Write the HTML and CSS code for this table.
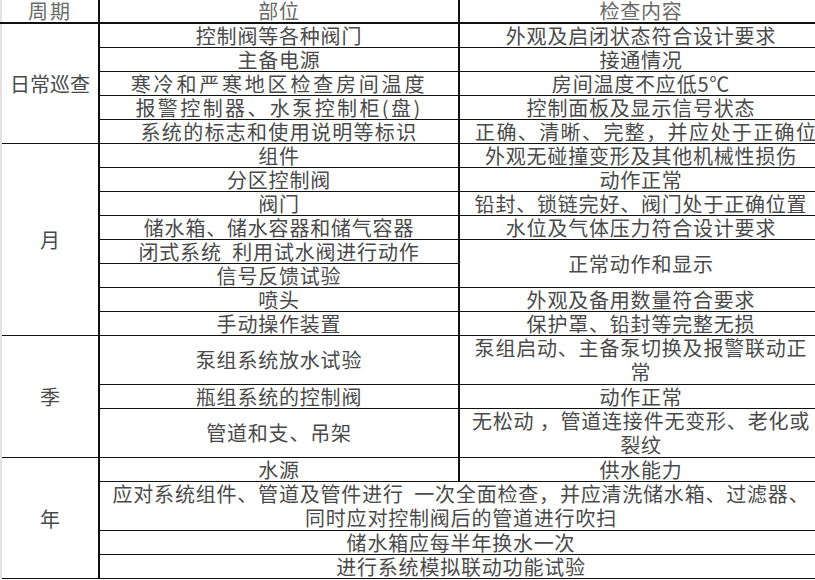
FILE: index.html
```html
<!DOCTYPE html>
<html lang="zh-CN">
<head>
<meta charset="utf-8">
<title>检查项目</title>
<link rel="stylesheet" href="styles.css">
</head>
<body>
<table class="grid">
  <colgroup>
    <col class="c1">
    <col class="c2">
    <col class="c3">
  </colgroup>
  <thead>
    <tr class="head">
      <th class="period">周期</th>
      <th>部位</th>
      <th>检查内容</th>
    </tr>
  </thead>
  <tbody>
    <tr>
      <td class="period" rowspan="5">日常巡查</td>
      <td>控制阀等各种阀门</td>
      <td>外观及启闭状态符合设计要求</td>
    </tr>
    <tr>
      <td>主备电源</td>
      <td>接通情况</td>
    </tr>
    <tr>
      <td class="wide3">寒冷和严寒地区检查房间温度</td>
      <td>房间温度不应低5℃</td>
    </tr>
    <tr>
      <td class="wide2">报警控制器、水泵控制柜(盘)</td>
      <td>控制面板及显示信号状态</td>
    </tr>
    <tr>
      <td class="wide1">系统的标志和使用说明等标识</td>
      <td class="clip">正确、清晰、完整，并应处于正确位置</td>
    </tr>
    <tr class="sec">
      <td class="period" rowspan="8">月</td>
      <td>组件</td>
      <td>外观无碰撞变形及其他机械性损伤</td>
    </tr>
    <tr>
      <td>分区控制阀</td>
      <td>动作正常</td>
    </tr>
    <tr>
      <td>阀门</td>
      <td>铅封、锁链完好、阀门处于正确位置</td>
    </tr>
    <tr>
      <td>储水箱、储水容器和储气容器</td>
      <td>水位及气体压力符合设计要求</td>
    </tr>
    <tr>
      <td>闭式系统&nbsp; 利用试水阀进行动作</td>
      <td rowspan="2">正常动作和显示</td>
    </tr>
    <tr>
      <td>信号反馈试验</td>
    </tr>
    <tr>
      <td>喷头</td>
      <td>外观及备用数量符合要求</td>
    </tr>
    <tr>
      <td>手动操作装置</td>
      <td>保护罩、铅封等完整无损</td>
    </tr>
    <tr class="sec double">
      <td class="period" rowspan="3">季</td>
      <td>泵组系统放水试验</td>
      <td>泵组启动、主备泵切换及报警联动正<br>常</td>
    </tr>
    <tr>
      <td>瓶组系统的控制阀</td>
      <td>动作正常</td>
    </tr>
    <tr class="double">
      <td>管道和支、吊架</td>
      <td>无松动 ，管道连接件无变形、老化或<br>裂纹</td>
    </tr>
    <tr class="sec">
      <td class="period" rowspan="4">年</td>
      <td>水源</td>
      <td>供水能力</td>
    </tr>
    <tr class="double">
      <td colspan="2">应对系统组件、管道及管件进行&nbsp; 一次全面检查，并应清洗储水箱、过滤器、<br>同时应对控制阀后的管道进行吹扫</td>
    </tr>
    <tr>
      <td colspan="2">储水箱应每半年换水一次</td>
    </tr>
    <tr>
      <td colspan="2">进行系统模拟联动功能试验</td>
    </tr>
  </tbody>
</table>
</body>
</html>
```
FILE: styles.css
```css
html, body {
  margin: 0;
  padding: 0;
  background: #ffffff;
  overflow: hidden;
}

body {
  width: 815px;
  height: 580px;
  font-family: "Noto Sans CJK SC", "Noto Sans", sans-serif;
  font-size: 20px;
  color: #4a4a4a;
}

.grid {
  border-collapse: collapse;
  table-layout: fixed;
  width: 822px;
}

.c1 { width: 98px; }
.c2 { width: 360px; }
.c3 { width: 364px; }

.grid th,
.grid td {
  height: 23px;
  padding: 0 6px;
  line-height: 23px;
  text-align: center;
  vertical-align: middle;
  white-space: nowrap;
  letter-spacing: 0.8px;
  font-weight: 400;
  border-top: 1px solid #111;
  border-bottom: 1px solid #111;
  border-left: 2px solid #111;
  border-right: 2px solid #111;
}

.grid th {
  color: #6a6a6a;
  border-top: none;
  border-bottom: 2px solid #111;
  height: 22px;
  line-height: 22px;
}

.grid .period {
  border-left: 2px solid #e2e2e2;
  letter-spacing: 0;
}

.grid th.period {
  letter-spacing: 2px;
}

.grid tr.double td {
  height: 48px;
  line-height: 24px;
}

.grid .wide3 { letter-spacing: 2.8px; }
.grid .wide2 { letter-spacing: 2.4px; }
.grid .wide1 { letter-spacing: 1.3px; }

.grid .clip {
  text-align: left;
  padding-left: 15px;
  letter-spacing: 1.4px;
  overflow: hidden;
}
```
